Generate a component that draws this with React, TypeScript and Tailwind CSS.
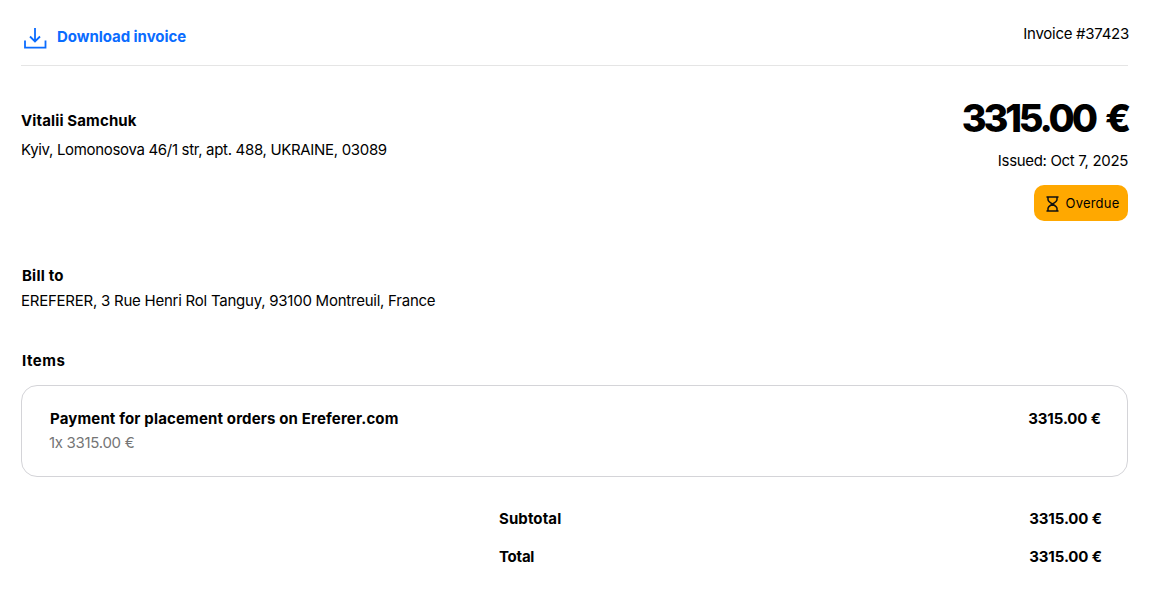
const font = "font-['Inter',sans-serif]";

function DownloadIcon() {
  return (
    <svg width="24" height="24" viewBox="0 0 24 24" fill="none" stroke="#0a6cff" strokeWidth="1.8" className="shrink-0">
      <path d="M12 2v13.500M7 10.500l5 5 5-5" />
      <path d="M2 14.500v7.200h20.500v-7.200" />
    </svg>
  );
}

function HourglassIcon() {
  return (
    <svg width="13" height="16" viewBox="0 0 13 16" fill="none" stroke="#111" strokeWidth="1.5" strokeLinejoin="round">
      <path d="M1 1h11" strokeLinecap="round" />
      <path d="M1 15h11" strokeLinecap="round" />
      <path d="M2 1v2.500c0 1.800 2 3 4.500 4.500C9 6.500 11 5.300 11 3.500V1" />
      <path d="M2 15v-2.500C2 10.700 4 9.500 6.500 8 9 9.500 11 10.700 11 12.500V15" />
    </svg>
  );
}

export default function App() {
  return (
    <div className={`${font} bg-white text-black h-[607px] pl-[21px] pr-[23px] text-[15px] tracking-[-0.24px]`}>
      <div className="h-[66px] flex justify-between border-b border-[#e5e5e5]">
        <div className="flex items-center gap-[10px] pl-[2px] pt-[10px] h-[65px]">
          <DownloadIcon />
          <span className="text-[#0a6cff] font-bold text-[15px] tracking-[-0.05px]">Download invoice</span>
        </div>
        <div className="pt-[24px] leading-[20px] translate-x-[1px] tracking-[-0.27px]">Invoice #37423</div>
      </div>

      <div className="flex justify-between h-[178px]">
        <div className="pt-[45px]">
          <div className="font-bold leading-[20px] tracking-[0.13px]">Vitalii Samchuk</div>
          <div className="mt-[9px] leading-[20px] tracking-[-0.32px]">Kyiv, Lomonosova 46/1 str, apt. 488, UKRAINE, 03089</div>
        </div>
        <div className="flex flex-col items-end pt-[28px]">
          <div className="text-[38px] leading-[48px] font-extrabold tracking-[-3.2px] [word-spacing:5px]">3315.00 €</div>
          <div className="mt-[9px] leading-[20px] tracking-[-0.33px]">Issued: Oct 7, 2025</div>
          <div className="mt-[14px] h-[36px] w-[94px] rounded-[10px] bg-[#ffa800] flex items-center justify-center gap-[7px] pl-[3px] pt-[1px] text-[13px] tracking-[0.2px]">
            <HourglassIcon />
            <span>Overdue</span>
          </div>
        </div>
      </div>

      <div className="pt-[22px]">
        <div className="font-bold leading-[20px] tracking-[0.2px] pl-[1px]">Bill to</div>
        <div className="mt-[5px] leading-[20px]">EREFERER, 3 Rue Henri Rol Tanguy, 93100 Montreuil, France</div>
      </div>

      <div className="mt-[40px] font-bold leading-[20px] tracking-[0.5px] pl-[1px]">Items</div>

      <div className="mt-[14px] h-[92px] rounded-[16px] border border-[#d4d4d8] pl-[27px] pr-[26px] pt-[23px] flex justify-between">
        <div>
          <div className="font-bold leading-[20px] tracking-[0.15px] pl-[1px]">Payment for placement orders on Ereferer.com</div>
          <div className="mt-[4px] leading-[20px] text-[#757575] tracking-[-0.3px]">1x 3315.00 €</div>
        </div>
        <div className="font-bold leading-[20px] tracking-[-0.1px]">3315.00 €</div>
      </div>

      <div className="mt-[32px] ml-[478px] pr-[26px] flex flex-col gap-[18px]">
        <div className="flex justify-between font-bold leading-[20px]">
          <span className="tracking-[0.1px]">Subtotal</span>
          <span className="tracking-[-0.1px]">3315.00 €</span>
        </div>
        <div className="flex justify-between font-bold leading-[20px]">
          <span>Total</span>
          <span className="tracking-[-0.1px]">3315.00 €</span>
        </div>
      </div>
    </div>
  );
}
